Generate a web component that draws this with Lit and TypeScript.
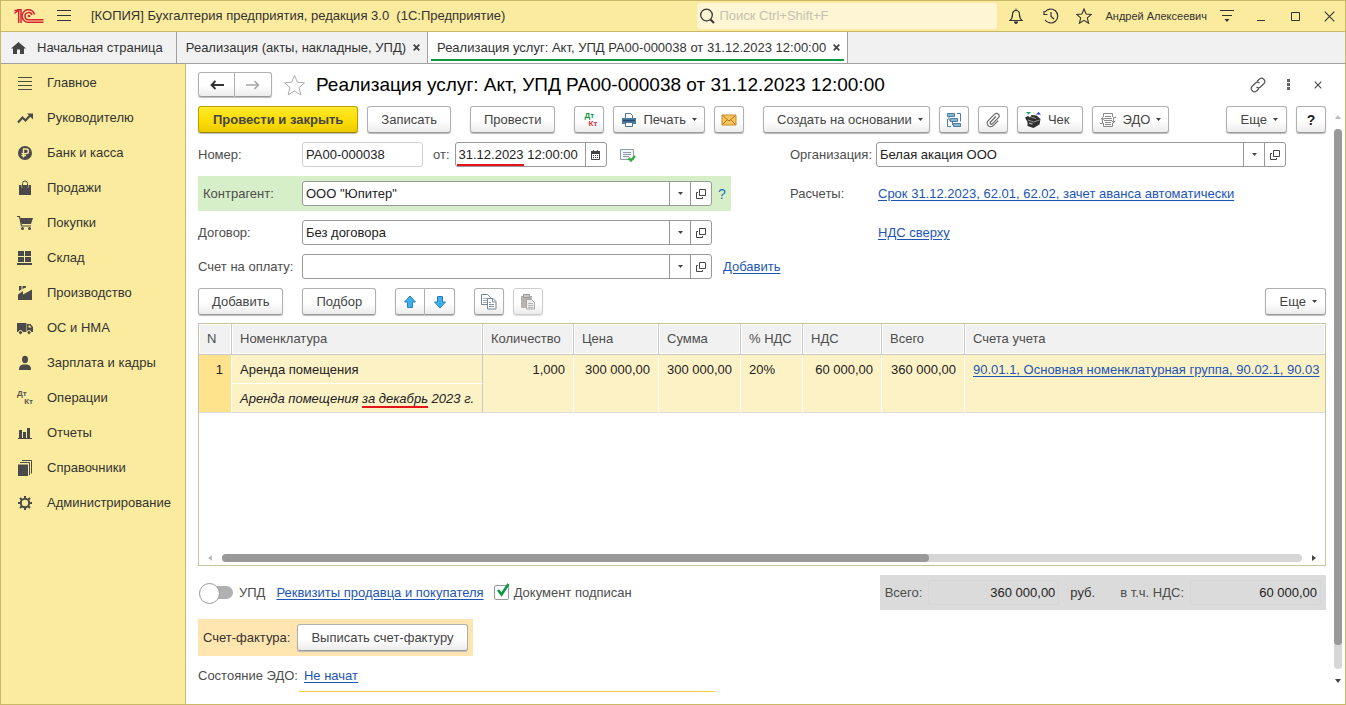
import { LitElement, html, css, svg, nothing, TemplateResult, SVGTemplateResult } from "lit";
import { customElement } from "lit/decorators.js";

const icon = (w: number, h: number, body: SVGTemplateResult) =>
  html`<svg class="icon" width=${w} height=${h} viewBox="0 0 ${w} ${h}" fill="none" aria-hidden="true">${body}</svg>`;

const INK = "#4a4a4a";

const caret = () => icon(5, 3, svg`<path d="M0 0h5L2.5 3z" fill="#444"/>`);
const cross = (size = 7, width = 1.6, color = "#444") =>
  icon(size, size, svg`<path d="M.7 .7 L${size - 0.7} ${size - 0.7} M${size - 0.7} .7 L.7 ${size - 0.7}" stroke=${color} stroke-width=${width}/>`);
const starPath = "M8 1l2.1 5 5.2.4-4 3.5 1.3 5.3L8 12.300l-4.600 2.900 1.300-5.300-4-3.500 5.200-.4z";

const logo = () => icon(30, 15, svg`
  <g stroke="#d9232e" stroke-width="1.500">
    <path d="M.5 4.500 L4 1.500 H4.700 V14 M3 .8 h4 V14 M.5 1.500 h3"/>
    <path d="M20.500 5.500 A6.300 6.300 0 1 0 15 13.300 H29.500"/>
    <path d="M18 6 A3.600 3.600 0 1 0 15 10.700 H29.500"/>
  </g>
  <circle cx="15" cy="7" r="1.300" fill="#d9232e"/>`);

const menuLines = () => icon(14, 12, svg`<path d="M0 .5h14M0 5.500h14M0 10.500h14" stroke="#333" stroke-width="1"/>`);

const side: Record<string, () => TemplateResult> = {
  main: () => icon(16, 16, svg`<path d="M1 2.500h14M1 6.500h14M1 10.500h14M1 14.500h14" stroke=${INK}/>`),
  chart: () => icon(16, 16, svg`<path d="M1 12.500L5.500 7.500 8.500 10.500 13.500 5" stroke=${INK} stroke-width="2.200"/><path d="M10 3.500h6v6z" fill=${INK}/>`),
  ruble: () => icon(16, 16, svg`<circle cx="8" cy="8" r="7" fill=${INK}/><path d="M6.500 12.500V4h2.700a2.300 2.300 0 0 1 0 4.600H4.500M4.500 10.500h4.500" stroke="#fbeb9e" stroke-width="1.400"/>`),
  bag: () => icon(16, 16, svg`<path d="M2 5h2.500v2.500h1V5h5v2.500h1V5H14v10H2z" fill=${INK}/><path d="M5.500 7V3.500a2.500 2.500 0 0 1 5 0V7" stroke=${INK}/>`),
  cart: () => icon(16, 16, svg`<path d="M0 1.500h2.500l2 9.500h9.500" stroke=${INK} stroke-width="1.200"/><path d="M3 3h13l-2 6H4.500z" fill=${INK}/><circle cx="5.500" cy="13.500" r="1.500" fill=${INK}/><circle cx="12.500" cy="13.500" r="1.500" fill=${INK}/>`),
  store: () => icon(16, 16, svg`<path d="M1 1h6v5H1zM8 1h6v5H8zM1 7h6v5H1zM8 7h6v5H8zM0 13h15v2H0z" fill=${INK}/>`),
  factory: () => icon(16, 16, svg`<path d="M1 15V9.500L6 6v3.500L15 4.500V15z" fill=${INK}/><path d="M2 1h2.500v3.500L2 6zM5.500 1H9v1.500L5.500 4z" fill=${INK}/>`),
  truck: () => icon(16, 16, svg`<path d="M0 3h9.500v9H0z" fill=${INK}/><path d="M10 4h3.500L16 7v5h-6z" fill=${INK}/><path d="M11.500 5.500h1.500l1.500 2h-3z" fill="#fbeb9e"/><circle cx="3.500" cy="12.500" r="2" fill=${INK} stroke="#fbeb9e"/><circle cx="12" cy="12.500" r="2" fill=${INK} stroke="#fbeb9e"/>`),
  person: () => icon(16, 16, svg`<ellipse cx="8" cy="4.500" rx="3" ry="3.700" fill=${INK}/><path d="M2 15c0-4 1.500-5 4-5.500h4c2.500.500 4 1.500 4 5.500z" fill=${INK}/>`),
  bars: () => icon(16, 16, svg`<path d="M2 5h3v8H2zM6 7h3v6H6zM10 3h3v10h-3zM1 13h14v1H1z" fill=${INK}/>`),
  books: () => icon(16, 16, svg`<path d="M1 4.500h10V16H1z" fill=${INK}/><path d="M3 2.500h9.500V15M5 .5h9.500V13.500" stroke=${INK}/>`),
  gear: () => icon(16, 16, svg`<circle cx="8" cy="8" r="4.200" stroke=${INK} stroke-width="2"/><path d="M8 1v2.500M8 12.500V15M1 8h2.500M12.500 8H15M3 3l2 2M11 11l2 2M13 3l-2 2M5 11l-2 2" stroke=${INK} stroke-width="2"/>`),
};

const dtKt = () => html`<span class="dtkt" aria-hidden="true"><span class="dt">Дт</span><span class="kt">Кт</span></span>`;

const NAV: [string, string][] = [
  ["main", "Главное"],
  ["chart", "Руководителю"],
  ["ruble", "Банк и касса"],
  ["bag", "Продажи"],
  ["cart", "Покупки"],
  ["store", "Склад"],
  ["factory", "Производство"],
  ["truck", "ОС и НМА"],
  ["person", "Зарплата и кадры"],
  ["dtkt", "Операции"],
  ["bars", "Отчеты"],
  ["books", "Справочники"],
  ["gear", "Администрирование"],
];

const openIcon = () => icon(10, 10, svg`<path d="M3.500 .5h6v6h-6zM2 3.500H.5v6h6V8" stroke="#444"/>`);
const calendar = () => icon(9, 10, svg`<path d="M.5 1.500h8v8h-8z" stroke="#444"/><path d="M0 1h9v3H0z" fill="#444"/><path d="M2.500 0v2M6.500 0v2" stroke="#444"/><path d="M2 5.500h1M4 5.500h1M6 5.500h1M2 7.500h1M4 7.500h1M6 7.500h1" stroke="#444"/>`);
const posted = () => icon(16, 14, svg`<path d="M.5 1.500h13v10h-13z" fill="#f4f7fa" stroke="#8d9aa8"/><path d="M3 4.500h8M3 6.500h8M3 8.500h6" stroke="#8d9aa8"/><path d="M8.500 10l2.500 2.500L15 8" stroke="#2fae3a" stroke-width="2.400"/>`);
const printer = () => icon(16, 16, svg`<path d="M4.500 6V1.500h5l2 2V6" fill="#fff" stroke="#4f7191"/><path d="M1 6h14v6H1z" fill="#4f7ba3"/><path d="M2 8.500h12" stroke="#27496b" stroke-width="1.500"/><path d="M4.500 10.500h7v4h-7z" fill="#fff" stroke="#4f7191"/>`);
const mail = () => icon(16, 12, svg`<path d="M1 1h14v10H1z" fill="#f7c45e" stroke="#c98a2c"/><path d="M1.500 1.500L8 7l6.500-5.500M1.500 10.500L6 6M14.500 10.500L10 6" stroke="#b8741c"/>`);
const structure = () => icon(16, 16, svg`<path d="M1.500 1.500h7v3h-7zM4.500 6.500h7v3h-7zM7.500 11.500h7v3h-7z" fill="#8ab4d2" stroke="#4d7fa6"/><path d="M11 1.500h3.500v8M1.500 7v7.500H5M3 5v3h1M6.500 10v3" stroke="#4d7fa6"/>`);
const clip = (color = "#666") => icon(16, 16, svg`<path d="M11 4.500L5.500 10a1.200 1.200 0 0 0 1.800 1.800l6-6a2.500 2.500 0 0 0-3.600-3.600l-6.500 6.500a3.500 3.500 0 0 0 5 5l5-5" stroke=${color} stroke-width="1.200"/>`);
const cashbox = () => icon(18, 16, svg`<path d="M2 0h5L4.500 2.500z" fill="#18a558"/><path d="M12 2.500h5L14.500 0z" fill="#2b3bbf"/><path d="M1 5.500l3-1.500 2 1.500 1.500-2.500 5 .500 4 3.500-1 5.500-6 3.500-6-2v-4z" fill="#2e2e2e"/><path d="M4 8l5.500 2 6-2M7 5l5 1.500" stroke="#999"/><path d="M5 11l3.500 1.200" stroke="#bbb" stroke-width="1.300"/>`);
const edo = () => icon(16, 16, svg`<path d="M3.500 5V1.500h9V5M3.500 11v3.500h9V11" stroke="#8a8a8a"/><path d="M5 4.500h6M4 6.500h8M4 8.500h8M5 10.500h6M5 12.500h6" stroke="#8a8a8a"/><path d="M0 11.500h2.500V6M16 5.500h-2.500V10" stroke="#8a8a8a"/><path d="M.5 7.500h4L2.500 5zM11.500 9h4l-2 2.500z" fill="#8a8a8a"/>`);
const up = () => icon(12, 14, svg`<path d="M6 1l5.500 6H8.500v5.500h-5V7H.5z" fill="#3fb0ee" stroke="#2b82b8"/>`);
const down = () => icon(12, 14, svg`<path d="M6 13L.5 7h3V1.500h5V7h3z" fill="#3fb0ee" stroke="#2b82b8"/>`);
const copy = () => icon(16, 16, svg`<path d="M.5 .5h6l3 3v7h-9z" fill="#fff" stroke="#71869b"/><path d="M2 4.500h5M2 6.500h5M2 8.500h4" stroke="#9fb0c0"/><path d="M6.500 4.500h5.500l3 3v7.500h-8.500z" fill="#fff" stroke="#71869b"/><path d="M11.500 4.500v3.500H15M8 10.500h5M8 12.500h5M8 8.500h2" stroke="#8397aa"/>`);
const paste = () => icon(16, 16, svg`<path d="M1 2h11v12H1z" fill="#b9b3b0"/><path d="M3.500 .5h6v3h-6z" fill="#c9c9c9" stroke="#999"/><path d="M6.500 5.500h5l3 3V15h-8z" fill="#ececec" stroke="#a8a8a8"/><path d="M8 9.500h5M8 11.500h5M8 13.500h5" stroke="#b5b5b5"/>`);

interface Field {
  id: string;
  label: string;
  value: string;
}

@customElement("app-root")
export class AppRoot extends LitElement {
  static styles = css`
    :host {
      display: flex;
      flex-direction: column;
      box-sizing: border-box;
      min-height: 100vh;
      border: 1px solid #c9b866;
      background: #fff;
      color: #4d4d4d;
      font: 13px/16px "Liberation Sans", Arial, sans-serif;
    }
    * { box-sizing: border-box; }
    button, input { font: inherit; color: inherit; margin: 0; }
    button { padding: 0; border: 0; background: none; display: inline-flex; align-items: center; justify-content: center; white-space: nowrap; }
    a { color: #1c55b5; text-decoration: underline; text-underline-offset: 2px; white-space: nowrap; }
    .icon { flex: none; display: block; }

    .titlebar { display: flex; align-items: center; height: 31px; padding: 0 7px 0 13px; background: #fbeb9e; border-bottom: 1px solid #c9b866; color: #333; }
    .burger { width: 14px; margin: 0 20px 0 13px; }
    .app-title { flex: 1; white-space: pre; }
    .search { display: flex; align-items: center; gap: 4px; width: 300px; height: 26px; padding-left: 2px; background: #fdf5d3; border-radius: 3px; }
    .search input { flex: 1; min-width: 0; border: 0; padding: 0; background: none; outline: none; }
    .search input::placeholder { color: #c5c1b4; opacity: 1; }
    .tools { display: flex; align-items: center; gap: 16px; margin-left: 10px; }
    .tools button { width: 18px; height: 20px; }
    .user { font-size: 11px; margin: 0 12px; color: #333; }
    .window { display: flex; gap: 16px; margin-left: 17px; }
    .window button { width: 18px; height: 20px; }

    .tabs { display: flex; height: 32px; background: #f1f1f1; border-bottom: 1px solid #a0a0a0; color: #333; }
    .tab { display: flex; align-items: center; gap: 6px; padding: 0 7px 0 9px; border-right: 1px solid #a0a0a0; white-space: nowrap; }
    .tab.home { padding: 0 13px 0 10px; gap: 11px; }
    .tab.active { position: relative; background: #fff; }
    .tab.active::after { content: ""; position: absolute; left: 3px; right: 3px; bottom: 2px; height: 2px; background: #0f9648; }
    .tab-close { width: 8px; height: 16px; }

    .body { flex: 1; display: flex; }
    .sidebar { width: 185px; flex: none; padding-top: 1px; background: #fbeb9e; border-right: 1px solid #c9b866; }
    .nav { display: flex; align-items: center; gap: 14px; height: 35px; padding-left: 16px; color: #333; text-decoration: none; }

    .page { flex: 1; min-width: 0; display: flex; flex-direction: column; padding: 8px 3px 0 12px; }
    .heading { display: flex; align-items: center; height: 25px; padding-right: 11px; margin-bottom: 9px; }
    h1 { flex: 1; margin: 0 0 0 10px; font: 19px/24px "Liberation Sans", Arial, sans-serif; color: #000; white-space: nowrap; }
    .head-tools { display: flex; gap: 12px; margin-right: 4px; }
    .head-tools button { width: 18px; height: 18px; }
    .pair { display: flex; }
    .btn { height: 27px; padding: 0 13px; gap: 6px; border: 1px solid #b0b0b0; border-bottom-color: #999; border-radius: 3px; background: linear-gradient(#fff 55%, #ececec); box-shadow: 0 1px 1px #bbb; color: #444; }
    .pair .btn { border-radius: 3px 0 0 3px; }
    .pair .btn + .btn { border-left: 0; border-radius: 0 3px 3px 0; }
    .heading .pair .btn { width: 37px; height: 25px; padding: 0; }
    .fav { margin-left: 11px; }
    .btn.square { width: 30px; padding: 0; }
    .btn.menu { padding: 0 6px 0 13px; }
    .btn.more { padding: 0 8px 0 14px; }
    .btn.iconic { padding: 0 7px; }
    .btn.receipt { padding: 0 13px 0 6px; }
    .btn.primary { padding: 0 14px; border-color: #b8a000; border-bottom-color: #9a8600; background: linear-gradient(#ffe92e, #fbdc00 60%, #eccb00); font-weight: bold; }
    .btn:disabled { border-color: #ccc; box-shadow: 0 1px 1px #ddd; }
    .toolbar { display: flex; gap: 9px; }
    .gap { margin-left: 10px; }
    .push { margin-left: auto; }
    .help { font-weight: bold; color: #222; font-size: 14px; }
    .dtkt { display: flex; flex-direction: column; width: 16px; font: bold 8px/8px "Liberation Sans", Arial, sans-serif; color: #555; }
    .dtkt .kt { align-self: flex-end; }
    .btn .dt { color: #0f9648; }
    .btn .kt { color: #d9363e; }

    .scroller { flex: 1; display: flex; gap: 8px; }
    .form { flex: 1; min-width: 0; display: flex; flex-direction: column; }
    .fields { display: grid; grid-template-columns: minmax(0, 592fr) minmax(0, 536fr); row-gap: 9px; margin: 9px 0; }
    .row { display: flex; align-items: center; min-height: 25px; }
    .row .label { width: 104px; flex: none; white-space: nowrap; }
    .row.right .label { width: 86px; }
    .row.right > a { margin-left: 2px; }
    .row .aside { width: 78px; flex: none; padding-left: 11px; }
    .row.right .aside { width: 40px; }
    .row.marked { height: 35px; margin-right: 59px; background: #d7efc8; }
    .row.marked .label { padding-left: 5px; }
    .row.marked .aside { width: 19px; padding: 0 0 0 6px; color: #1f76b8; font-size: 14px; }
    .field { position: relative; display: flex; flex: 1; min-width: 0; height: 25px; border: 1px solid #999; border-radius: 3px; background: #fff; }
    .field input { flex: 1; min-width: 0; width: 0; padding: 0 3px; border: 0; background: none; color: #222; outline: none; }
    .field button { width: 21px; border-left: 1px solid #999; }
    .field.number { flex: none; width: 121px; border-color: #d0d0d0; }
    .field.date { flex: none; width: 152px; }
    .field.date::after { content: ""; position: absolute; left: 1px; bottom: 0; width: 67px; height: 2px; background: #e8121c; }
    .from { margin: 0 5px 0 10px; }
    .posted { margin-left: 13px; }

    .grid-box { flex: 1; display: flex; flex-direction: column; min-height: 120px; margin-top: 8px; border: 1px solid #c8c4a4; overflow: hidden; }
    table { width: 100%; table-layout: fixed; border-collapse: separate; border-spacing: 0; }
    th, td { padding: 0 8px; text-align: left; font-weight: normal; white-space: nowrap; overflow: hidden; }
    th { height: 31px; background: #f1f1f1; border-right: 1px solid #c8c8c8; border-bottom: 1px solid #c8c8c8; box-shadow: inset 0 0 0 1px #fff; }
    th:last-child { border-right: 0; }
    td { height: 29px; background: #fdf1c6; color: #222; border-right: 1px solid #fff; border-bottom: 1px solid #dcdcdc; vertical-align: top; padding-top: 7px; }
    td.name { border-right-color: #c8c8c8; border-bottom-color: #fff; }
    td.note { font-style: italic; }
    td.num { text-align: right; }
    td.index { background: #fee28c; }
    td:last-child { border-right: 0; }
    td.note:last-child { border-right: 1px solid #c8c8c8; }
    .c-n { width: 33px; } .c-name { width: 251px; } .c-qty { width: 91px; } .c-price { width: 85px; }
    .c-sum { width: 82px; } .c-rate { width: 62px; } .c-vat { width: 79px; } .c-total { width: 83px; }
    .underlined { border-bottom: 2px solid #e8121c; }
    .hscroll { display: flex; align-items: center; gap: 10px; margin-top: auto; padding: 3px 9px; }
    .hscroll .track { flex: 1; height: 8px; border-radius: 4px; background: #d6d6d6; }
    .hscroll .thumb { width: 65.5%; height: 8px; border-radius: 4px; background: #999; }

    .summary { display: flex; align-items: center; height: 35px; margin: 9px 0; white-space: nowrap; }
    .switch { appearance: none; position: relative; width: 26px; height: 13px; margin: 0 6px 0 9px; border-radius: 0 7px 7px 0; background: #b0b0b0; }
    .switch::before { content: ""; position: absolute; left: -8px; top: -3px; width: 19px; height: 19px; border: 1px solid #999; border-radius: 50%; background: #fff; }
    .summary a { margin: 0 10px 0 11px; }
    .check { position: relative; display: flex; align-items: center; gap: 5px; }
    .check input { appearance: none; width: 15px; height: 15px; border: 1px solid #999; border-radius: 2px; background: #fff; }
    .check .icon { position: absolute; left: 2px; top: -2px; pointer-events: none; }
    .totals { display: flex; align-items: center; height: 35px; padding: 0 5px; margin-left: auto; background: #dbdbdb; }
    .totals input { width: 131px; height: 25px; padding: 0 3px; border: 1px solid #d6d6d6; border-radius: 3px; background: none; color: #222; text-align: right; }
    .totals .cur { margin: 0 25px 0 11px; color: #333; }
    .totals label { margin-right: 6px; }
    .invoice { display: flex; align-items: center; align-self: flex-start; height: 37px; padding: 0 5px; gap: 7px; background: #ffe5b0; color: #333; white-space: nowrap; }
    .edo { display: flex; gap: 6px; margin-top: 12px; }
    .edge { width: 416px; height: 1px; margin: 7px 0 12px 101px; background: #f5cb3c; }
    .vscroll { display: flex; flex-direction: column; align-items: center; width: 8px; padding: 9px 0 21px; gap: 10px; }
    .vscroll .track { flex: 1; width: 8px; border-radius: 4px; background: #d6d6d6; }
    .vscroll .thumb { width: 8px; height: 95.5%; border-radius: 4px; background: #999; }
  `;

  private lookup(f: Field) {
    return html`<div class="field">
      <input id=${f.id} .value=${f.value} />
      <button aria-label="Выбрать">${caret()}</button>
      <button aria-label="Открыть">${openIcon()}</button>
    </div>`;
  }

  private row(f: Field, aside: unknown = nothing, kind = "") {
    return html`<div class="row ${kind}">
      <label class="label" for=${f.id}>${f.label}</label>${this.lookup(f)}<div class="aside">${aside}</div>
    </div>`;
  }

  private titlebar() {
    return html`<header class="titlebar">
      ${logo()}
      <button class="burger" aria-label="Меню">${menuLines()}</button>
      <span class="app-title">[КОПИЯ] Бухгалтерия предприятия, редакция 3.0  (1С:Предприятие)</span>
      <label class="search">
        ${icon(16, 16, svg`<circle cx="7.500" cy="7" r="5.800" stroke="#333" stroke-width="1.300"/><path d="M11.500 11.500L15 15" stroke="#333" stroke-width="2"/>`)}
        <input type="search" aria-label="Поиск" placeholder="Поиск Ctrl+Shift+F" />
      </label>
      <div class="tools">
        <button aria-label="Уведомления">${icon(14, 16, svg`<path d="M1 12.500c2-1.500 2.500-3 2.500-6C3.500 4 5 2.500 7 2.500S10.500 4 10.500 6.500c0 3 .5 4.500 2.500 6z" stroke="#333" stroke-width="1.200"/><path d="M7 .5v2M5 14h4l-2 1.800z" stroke="#333" fill="#333"/>`)}</button>
        <button aria-label="История">${icon(17, 16, svg`<path d="M3 4A7 7 0 1 1 3 12M2 3v3.500h3.500" stroke="#333" stroke-width="1.200"/><path d="M9 4v4.500l3 2.500" stroke="#333" stroke-width="1.200"/>`)}</button>
        <button aria-label="Избранное">${icon(16, 16, svg`<path d=${starPath} stroke="#333" stroke-width="1.100"/>`)}</button>
      </div>
      <span class="user">Андрей Алексеевич</span>
      <button aria-label="Настройки">${icon(16, 14, svg`<path d="M1 1.500h14M3 6.500h10" stroke="#333" stroke-width="1.200"/><path d="M5.500 10h5L8 13z" fill="#333"/>`)}</button>
      <div class="window">
        <button aria-label="Свернуть">${icon(10, 10, svg`<path d="M1 9.500h8" stroke="#333"/>`)}</button>
        <button aria-label="Развернуть">${icon(10, 10, svg`<path d="M1.500 1.500h8v8h-8z" stroke="#333"/>`)}</button>
        <button aria-label="Закрыть">${cross(11, 1.1, "#333")}</button>
      </div>
    </header>`;
  }

  private tabs() {
    return html`<nav class="tabs">
      <div class="tab home">${icon(15, 14, svg`<path d="M7.500 1L15 7.500h-2V13H9V8.500H6V13H2V7.500H0z" fill="#444"/>`)}<span>Начальная страница</span></div>
      <div class="tab"><span>Реализация (акты, накладные, УПД)</span><button class="tab-close" aria-label="Закрыть">${cross(7, 1.8)}</button></div>
      <div class="tab active"><span>Реализация услуг: Акт, УПД РА00-000038 от 31.12.2023 12:00:00</span><button class="tab-close" aria-label="Закрыть">${cross(7, 1.8)}</button></div>
    </nav>`;
  }

  private toolbar() {
    return html`<div class="toolbar">
      <button class="btn primary">Провести и закрыть</button>
      <button class="btn">Записать</button>
      <button class="btn gap">Провести</button>
      <button class="btn square gap" aria-label="Проводки">${dtKt()}</button>
      <button class="btn iconic">${printer()}<span>Печать</span>${caret()}</button>
      <button class="btn square" aria-label="Отправить">${mail()}</button>
      <button class="btn menu gap">Создать на основании ${caret()}</button>
      <button class="btn square" aria-label="Структура">${structure()}</button>
      <button class="btn square" aria-label="Файлы">${clip()}</button>
      <button class="btn receipt">${cashbox()}<span>Чек</span></button>
      <button class="btn iconic">${edo()}<span>ЭДО</span>${caret()}</button>
      <button class="btn more push">Еще ${caret()}</button>
      <button class="btn square help">?</button>
    </div>`;
  }

  private fields() {
    return html`<div class="fields">
      <div class="row">
        <label class="label" for="number">Номер:</label>
        <div class="field number"><input id="number" .value=${"РА00-000038"} readonly /></div>
        <label class="from" for="date">от:</label>
        <div class="field date"><input id="date" .value=${"31.12.2023 12:00:00"} /><button aria-label="Календарь">${calendar()}</button></div>
        <span class="posted">${posted()}</span>
      </div>
      ${this.row({ id: "org", label: "Организация:", value: "Белая акация ООО" }, nothing, "right")}
      ${this.row({ id: "partner", label: "Контрагент:", value: 'ООО "Юпитер"' }, "?", "marked")}
      <div class="row right"><span class="label">Расчеты:</span><a href="#">Срок 31.12.2023, 62.01, 62.02, зачет аванса автоматически</a></div>
      ${this.row({ id: "contract", label: "Договор:", value: "Без договора" })}
      <div class="row right"><span class="label"></span><a href="#">НДС сверху</a></div>
      ${this.row({ id: "bill", label: "Счет на оплату:", value: "" }, html`<a href="#">Добавить</a>`)}
    </div>`;
  }

  private items() {
    return html`<div class="grid-box">
      <table>
        <colgroup>
          <col class="c-n" /><col class="c-name" /><col class="c-qty" /><col class="c-price" />
          <col class="c-sum" /><col class="c-rate" /><col class="c-vat" /><col class="c-total" /><col />
        </colgroup>
        <thead>
          <tr>${["N", "Номенклатура", "Количество", "Цена", "Сумма", "% НДС", "НДС", "Всего", "Счета учета"].map((t) => html`<th scope="col">${t}</th>`)}</tr>
        </thead>
        <tbody>
          <tr>
            <td class="num index" rowspan="2">1</td>
            <td class="name">Аренда помещения</td>
            <td class="num" rowspan="2">1,000</td>
            <td class="num" rowspan="2">300 000,00</td>
            <td class="num" rowspan="2">300 000,00</td>
            <td rowspan="2">20%</td>
            <td class="num" rowspan="2">60 000,00</td>
            <td class="num" rowspan="2">360 000,00</td>
            <td rowspan="2"><a href="#">90.01.1, Основная номенклатурная группа, 90.02.1, 90.03</a></td>
          </tr>
          <tr><td class="note">Аренда помещения <span class="underlined">за декабрь</span> 2023 г.</td></tr>
        </tbody>
      </table>
      <div class="hscroll">
        ${icon(4, 6, svg`<path d="M4 0v6L0 3z" fill="#bbb"/>`)}
        <div class="track"><div class="thumb"></div></div>
        ${icon(4, 6, svg`<path d="M0 0v6l4-3z" fill="#444"/>`)}
      </div>
    </div>`;
  }

  private footer() {
    return html`<div class="summary">
        <input class="switch" id="upd" type="checkbox" /><label for="upd">УПД</label>
        <a href="#">Реквизиты продавца и покупателя</a>
        <label class="check"><input type="checkbox" checked />${icon(14, 14, svg`<path d="M2 7l3.500 4.500L12.500 1" stroke="#0f9648" stroke-width="2.600"/>`)}<span>Документ подписан</span></label>
        <div class="totals">
          <label for="total">Всего:</label><input id="total" .value=${"360 000,00"} readonly />
          <span class="cur">руб.</span>
          <label for="vat">в т.ч. НДС:</label><input id="vat" .value=${"60 000,00"} readonly />
        </div>
      </div>
      <div class="invoice"><span>Счет-фактура:</span><button class="btn">Выписать счет-фактуру</button></div>
      <div class="edo"><span>Состояние ЭДО:</span><a href="#">Не начат</a></div>
      <div class="edge"></div>`;
  }

  render() {
    return html`${this.titlebar()}${this.tabs()}
      <div class="body">
        <nav class="sidebar">
          ${NAV.map(([key, text]) => html`<a class="nav" href="#">${key === "dtkt" ? dtKt() : side[key]()}<span>${text}</span></a>`)}
        </nav>
        <main class="page">
          <div class="heading">
            <div class="pair">
              <button class="btn" aria-label="Назад">${icon(14, 10, svg`<path d="M1 5h13" stroke="#333" stroke-width="2"/><path d="M5.500 1L1.500 5l4 4" stroke="#333" stroke-width="1.800"/>`)}</button>
              <button class="btn" aria-label="Вперед">${icon(14, 10, svg`<path d="M0 5h13" stroke="#aaa" stroke-width="1.600"/><path d="M8.500 1l4 4-4 4" stroke="#aaa" stroke-width="1.600"/>`)}</button>
            </div>
            <button class="fav" aria-label="В избранное"><svg class="icon" width="23" height="22" viewBox="0 0 16 16" fill="none"><path d=${starPath} stroke="#aaa" stroke-width=".7"/></svg></button>
            <h1>Реализация услуг: Акт, УПД РА00-000038 от 31.12.2023 12:00:00</h1>
            <div class="head-tools">
              <button aria-label="Ссылка">${icon(16, 16, svg`<path d="M7 4.500L9.500 2a3.200 3.200 0 0 1 4.500 4.500L10.500 10a3 3 0 0 1-4 0M9 11.500L6.500 14A3.200 3.200 0 0 1 2 9.500L5.500 6a3 3 0 0 1 4 0" stroke="#555" stroke-width="1.200"/>`)}</button>
              <button aria-label="Еще">${icon(3, 11, svg`<path d="M0 0h3v3H0zM0 4h3v3H0zM0 8h3v3H0z" fill="#666"/>`)}</button>
              <button aria-label="Закрыть">${cross(8, 1.1, "#444")}</button>
            </div>
          </div>
          <div class="scroller">
            <div class="form">
              ${this.toolbar()} ${this.fields()}
              <div class="toolbar">
                <button class="btn">Добавить</button>
                <button class="btn gap">Подбор</button>
                <div class="pair gap">
                  <button class="btn square" aria-label="Вверх">${up()}</button>
                  <button class="btn square" aria-label="Вниз">${down()}</button>
                </div>
                <button class="btn square gap" aria-label="Копировать">${copy()}</button>
                <button class="btn square" aria-label="Вставить" disabled>${paste()}</button>
                <button class="btn more push">Еще ${caret()}</button>
              </div>
              ${this.items()} ${this.footer()}
            </div>
            <div class="vscroll">
              ${icon(6, 4, svg`<path d="M0 4h6L3 0z" fill="#bbb"/>`)}
              <div class="track"><div class="thumb"></div></div>
              ${icon(6, 4, svg`<path d="M0 0h6L3 4z" fill="#444"/>`)}
            </div>
          </div>
        </main>
      </div>`;
  }
}
